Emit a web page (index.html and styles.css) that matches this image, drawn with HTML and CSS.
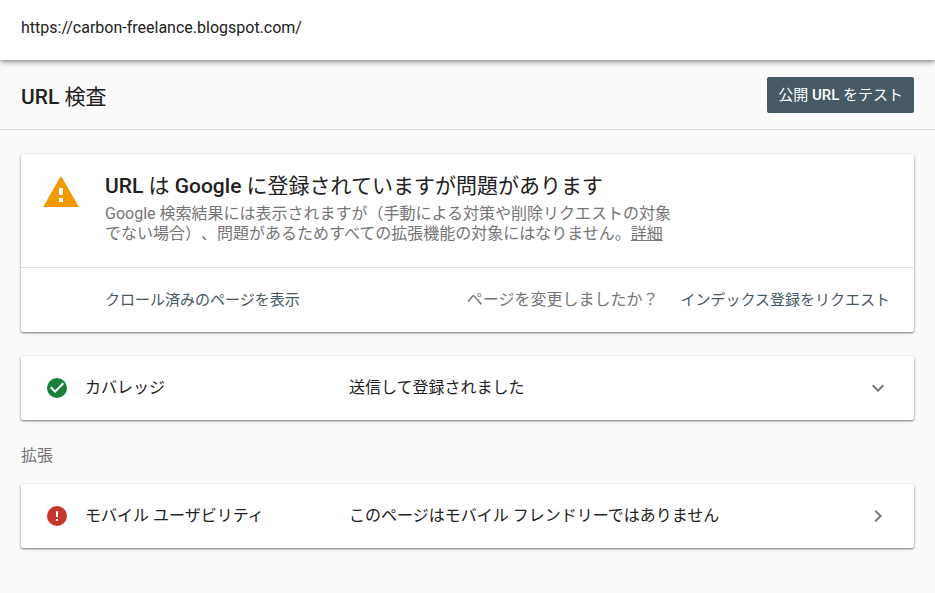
FILE: index.html
```html
<!DOCTYPE html>
<html lang="ja">
<head>
    <meta charset="UTF-8">
    <meta name="viewport" content="width=device-width, initial-scale=1.0">
    <title>URL 検査</title>
    <link rel="stylesheet" href="styles.css">
</head>
<body>
    <header class="topbar">https://carbon-freelance.blogspot.com/</header>
    <div class="page-header">
        <h1 class="page-title"><span class="latin">URL</span> 検査</h1>
        <button class="button-test" type="button">公開 <span class="latin">URL</span> をテスト</button>
    </div>
    <main class="content">
        <!-- Index status -->
        <section class="card">
            <div class="status">
                <svg class="status-icon" viewBox="0 0 36 31" aria-hidden="true">
                    <path fill="#f29900" d="M18 0L36 31H0z"/>
                    <path fill="#fff" d="M16 12h4v7h-4zM16 22h4v4h-4z"/>
                </svg>
                <div class="status-body">
                    <h2 class="status-title"><span class="latin">URL</span> は <span class="latin">Google</span> に登録されていますが問題があります</h2>
                    <p class="status-text">Google 検索結果には表示されますが（手動による対策や削除リクエストの対象でない場合）、問題があるためすべての拡張機能の対象にはなりません。<a class="more" href="#">詳細</a></p>
                </div>
            </div>
            <div class="actions">
                <button class="button-link" type="button">クロール済みのページを表示</button>
                <div class="request">
                    <span>ページを変更しましたか？</span>
                    <button class="button-link" type="button">インデックス登録をリクエスト</button>
                </div>
            </div>
        </section>

        <!-- Coverage -->
        <section class="card row">
            <svg class="row-icon" viewBox="0 0 24 24" aria-hidden="true">
                <circle cx="12" cy="12" r="10" fill="#188038"/>
                <path fill="#fff" d="M10 17l-5-5 1.4-1.4 3.6 3.6 7.6-7.6L19 8z"/>
            </svg>
            <span class="row-name">カバレッジ</span>
            <span class="row-value">送信して登録されました</span>
            <button class="row-toggle" type="button" aria-label="展開">
                <svg viewBox="0 0 24 24"><path d="M7.4 8.6L12 13.2l4.6-4.6L18 10l-6 6-6-6z"/></svg>
            </button>
        </section>

        <!-- Enhancements -->
        <h3 class="section-title">拡張</h3>
        <section class="card row">
            <svg class="row-icon" viewBox="0 0 24 24" aria-hidden="true">
                <circle cx="12" cy="12" r="10" fill="#c5372b"/>
                <path fill="#fff" d="M11 7h2v6h-2zM11 15h2v2h-2z"/>
            </svg>
            <span class="row-name">モバイル ユーザビリティ</span>
            <span class="row-value">このページはモバイル フレンドリーではありません</span>
            <button class="row-toggle" type="button" aria-label="開く">
                <svg viewBox="0 0 24 24"><path d="M8.6 16.6L13.2 12 8.6 7.4 10 6l6 6-6 6z"/></svg>
            </button>
        </section>
    </main>
</body>
</html>
```
FILE: styles.css
```css
* {
    box-sizing: border-box;
}
body {
    margin: 0;
    background-color: #fafafa;
    color: #212121;
    font-family: Roboto, 'Noto Sans CJK JP', sans-serif;
    font-size: 16px;
    line-height: 20px;
    text-spacing-trim: space-all;
}
h1, h2, h3, p {
    margin: 0;
}
button {
    border: none;
    background: none;
    font-family: inherit;
    line-height: 20px;
    cursor: pointer;
}
/* Only the latin words of a heading are medium */
.latin {
    font-weight: 500;
}
.topbar {
    position: relative;
    padding: 18px 21px 22px;
    background-color: #fff;
    box-shadow: 0 1px 6px rgba(0, 0, 0, 0.6);
}
.page-header {
    display: flex;
    justify-content: space-between;
    align-items: center;
    padding: 17px 21px 16px;
    border-bottom: 1px solid #dadada;
}
.page-title {
    font-size: 21px;
    font-weight: 400;
    line-height: 28px;
    padding-top: 4px;
}
.button-test {
    height: 36px;
    padding: 0 11px;
    border-radius: 2px;
    background-color: #455a64;
    color: #fff;
    font-size: 15px;
}
.content {
    padding: 24px 21px;
}
.card {
    margin-bottom: 24px;
    border-radius: 2px;
    background-color: #fff;
    box-shadow: 0 1px 3px rgba(0, 0, 0, 0.4), 0 1px 1px rgba(0, 0, 0, 0.2);
}
.status {
    display: flex;
    align-items: flex-start;
    gap: 26px;
    padding: 18px 22px 23px;
}
.status-icon {
    flex: none;
    width: 36px;
    height: 31px;
    margin-top: 4px;
}
.status-body {
    max-width: 576px;
}
.status-title {
    font-size: 21px;
    font-weight: 400;
    line-height: 28px;
    margin-bottom: 4px;
}
.status-text {
    color: #757575;
}
.more {
    color: inherit;
}
.actions {
    display: flex;
    justify-content: space-between;
    align-items: center;
    height: 65px;
    padding: 0 24px 0 84px;
    border-top: 1px solid #e0e0e0;
}
.button-link {
    padding: 0;
    color: #455a64;
    font-size: 15px;
}
.request {
    display: flex;
    align-items: center;
    gap: 22px;
    color: #757575;
}
.row {
    display: flex;
    align-items: center;
    height: 64px;
    padding: 0 24px;
}
.row-icon {
    flex: none;
    width: 24px;
    height: 24px;
    margin-right: 16px;
}
.row-name {
    flex: none;
    width: 264px;
}
.row-value {
    flex: 1;
}
.row-toggle {
    width: 24px;
    height: 24px;
    padding: 0;
}
.row-toggle svg {
    display: block;
    fill: #757575;
}
.section-title {
    margin: 26px 0 18px;
    color: #757575;
    font-size: 16px;
    font-weight: 400;
}
```
